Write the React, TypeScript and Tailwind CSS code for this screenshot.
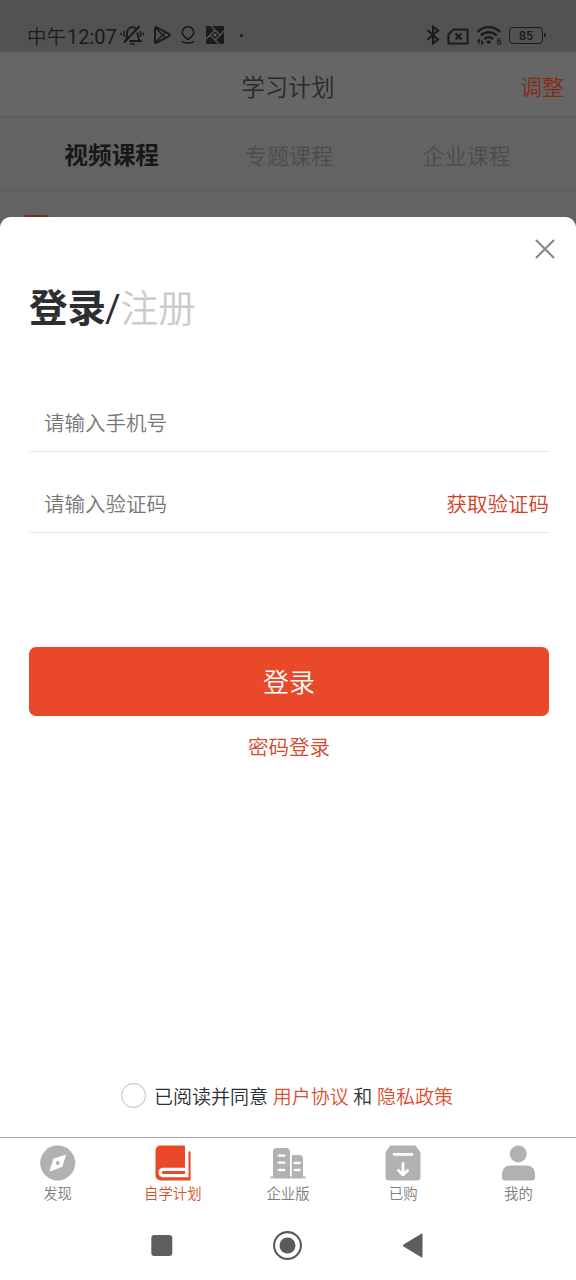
import { useState } from 'react'
import type { ReactNode } from 'react'

// ─── 状态栏图标 ───────────────────────────────────────────────────────────────

function MutedBellIcon() {
  return (
    <svg width="24" height="20" viewBox="0 0 24 20" fill="none" stroke="#1b1b1b" strokeWidth="2">
      <path d="M5.5 15.5C7 14 7 12.5 7 9c0-4 2.2-6.7 5.2-6.7 1.9 0 3.2.7 4.1 1.7M17.5 7.5c.2 4 .2 6.2 2.7 8.500H9.500" />
      <path d="M4 17.500 19.500 1.200" strokeWidth="2.100" />
      <path d="M10 19h5M4 6v6M20.500 6v6" strokeWidth="1.600" />
      <path d="M1 7.800v2.500M23.200 7.800v2.500" strokeWidth="1.600" />
    </svg>
  )
}

function PlayStoreIcon() {
  return (
    <svg width="17" height="18" viewBox="0 0 17 18" fill="none" stroke="#1b1b1b" strokeWidth="1.900" strokeLinejoin="round">
      <path d="M1 2.200c0-1 .8-1.400 1.700-.9l12.300 6.500c1 .6 1 1.700 0 2.300L2.700 16.700c-.9.500-1.700.1-1.700-.9z" />
      <path d="M1.500 1.700 11.500 12M1.500 16.300 11.500 6" strokeWidth="1.600" />
    </svg>
  )
}

function PinIcon() {
  return (
    <svg width="14" height="18" viewBox="0 0 14 18" fill="none" stroke="#1b1b1b" strokeWidth="1.600" strokeLinecap="round">
      <path d="M7 13.500C4.500 11.500 1.300 9.800 1.300 6.400a5.700 5.700 0 0 1 11.400 0C12.700 9.800 9.500 11.500 7 13.500z" />
      <path d="M1.500 15.500c2.500 2.200 8.500 2.200 11 0" />
    </svg>
  )
}

function PinwheelIcon() {
  return (
    <svg width="18" height="18" viewBox="0 0 18 18">
      <rect width="18" height="18" rx="1" fill="#1b1b1b" />
      <g stroke="#525252" strokeWidth="1.500" fill="none">
        <path d="M9 4 14 9 9 14 4 9zM9 4 5 0M14 9l4-4M9 14l4 4M4 9l-4 4" />
      </g>
      <path d="M9 7 11 9 9 11 7 9z" fill="#606060" />
    </svg>
  )
}

function BluetoothIcon() {
  return (
    <svg width="14" height="20" viewBox="0 0 14 20" fill="none" stroke="#1b1b1b" strokeWidth="2.100">
      <path d="M1.500 5.300 12 14.500 7 18.300V1.700l5 3.800L1.500 14.700" />
    </svg>
  )
}

function SimIcon() {
  return (
    <svg width="22" height="17" viewBox="0 0 22 17" fill="none" stroke="#1b1b1b" strokeWidth="2" strokeLinejoin="round">
      <path d="M6.500 1.400H20a.6.600 0 0 1 .6.600v13a.6.600 0 0 1-.6.600H2a.6.600 0 0 1-.6-.6V6.500z" />
      <path d="M8.500 5.500 14.500 11.500M14.500 5.500 8.500 11.500" strokeWidth="2.200" />
    </svg>
  )
}

function WifiIcon() {
  return (
    <svg width="26" height="20" viewBox="0 0 26 20" fill="none" stroke="#1b1b1b" strokeWidth="2.400">
      <path d="M1.500 6.800C8 .5 17.500.5 24 6.800M4.800 10.500c4.500-4.300 11.400-4.300 15.900 0M8.300 14c2.500-2.300 6.400-2.300 8.900 0" />
      <path d="M12.700 19 9.900 16.500c1.700-1.300 3.900-1.300 5.600 0z" fill="#1b1b1b" stroke="none" />
      <path d="M3.200 19v-4.300L1.300 16.500M5.700 14.700V19l1.900-1.800" strokeWidth="1.200" />
      <text x="20.500" y="19.500" fill="#1b1b1b" stroke="none" className="font-['Roboto',sans-serif] text-[8.5px] font-bold">
        6
      </text>
    </svg>
  )
}

function StatusBar() {
  return (
    <div className="flex h-[53px] items-start border-b-2 border-[#5c5c5c] bg-[#525252] pt-[25px] text-[#1b1b1b]">
      <div className="ml-[27px] flex h-5 w-[93px] shrink-0 items-center whitespace-nowrap text-[19.5px] leading-5">
        <span className="mt-[5px] font-[350]">中午</span>
        <span className="mt-[3px] ml-px font-['Roboto',sans-serif] text-[20px]">12:07</span>
      </div>
      <div className="flex h-5 items-center">
        <MutedBellIcon />
        <div className="ml-[10px]"><PlayStoreIcon /></div>
        <div className="ml-[10px]"><PinIcon /></div>
        <div className="ml-[11px]"><PinwheelIcon /></div>
        <span className="ml-4 size-[3px] rounded-full bg-[#1b1b1b]" />
      </div>
      <div className="mr-[30px] ml-auto flex h-5 items-center">
        <BluetoothIcon />
        <div className="ml-[7px] pt-[2px]"><SimIcon /></div>
        <div className="ml-[7px]"><WifiIcon /></div>
        <div className="ml-[7px] flex items-center">
          <span className="flex h-[17px] w-[34px] items-center justify-center rounded-[4px] border-[1.5px] border-[#1b1b1b] font-['Roboto',sans-serif] text-[12.5px] font-medium leading-3">
            <span className="mt-px">85</span>
          </span>
          <span className="ml-px h-1 w-[2px] rounded-r bg-[#1b1b1b]" />
        </div>
      </div>
    </div>
  )
}

// ─── 底部导航图标 ─────────────────────────────────────────────────────────────

const DiscoverIcon = () => (
  <svg width="36" height="36" viewBox="0 0 36 36">
    <circle cx="17.700" cy="18" r="17.500" fill="#b1b1b1" />
    <path d="M26.200 9.500 22.300 21.700 9.200 26.700 13.400 13.700z" fill="#fff" />
    <circle cx="17.700" cy="18" r="1.900" fill="#b1b1b1" />
  </svg>
)

const PlanIcon = () => (
  <svg width="36" height="36" viewBox="0 0 36 36">
    <path d="M5.500.500H29a1 1 0 0 1 1 1V22.700H8a5 5 0 0 0-4.500 5A5 5 0 0 0 8 32.200H33.500V6.500H35.600V35.500H5.500a5 5 0 0 1-5-5V5.500a5 5 0 0 1 5-5z" fill="#e94829" />
    <path d="M30 25.900H8.200a1.500 1.500 0 0 0 0 3H30z" fill="#e94829" />
  </svg>
)

const CompanyIcon = () => (
  <svg width="36" height="36" viewBox="0 0 36 36" fill="#b1b1b1">
    <path d="M.5 31.500H3V7a4 4 0 0 1 4-4h9a4 4 0 0 1 4 4v24.500h1.800V10H29a4 4 0 0 1 4 4v17.500h2.500v2H.5z" />
    <path d="M8.700 10.700h5.600M8.700 17.700h5.600M8.700 25h5.600M24.700 18h5M24.700 25h5" stroke="#fff" strokeWidth="2.300" strokeLinecap="round" />
  </svg>
)

const PurchasedIcon = () => (
  <svg width="36" height="36" viewBox="0 0 36 36">
    <path d="M7 .5h22a3 3 0 0 1 2.500 1.200l3 4.300c.6.800 1 1.500 1 2.500V32a3.500 3.500 0 0 1-3.500 3.500H4A3.500 3.500 0 0 1 .5 32V8.500c0-1 .3-1.700.9-2.500l3-4.300A3 3 0 0 1 7 .5z" fill="#b1b1b1" />
    <g fill="none" stroke="#fff" strokeWidth="2.800" strokeLinecap="round" strokeLinejoin="round">
      <path d="M9 9.300H27M18 18.500V29M13.500 25.500 18 30 22.500 25.500" />
    </g>
  </svg>
)

const MineIcon = () => (
  <svg width="36" height="36" viewBox="0 0 36 36" fill="#b1b1b1">
    <circle cx="18.300" cy="9" r="8.500" />
    <path d="M10 20.500H27a8 8 0 0 1 8 8v4a3 3 0 0 1-3 3H5a3 3 0 0 1-3-3v-4a8 8 0 0 1 8-8z" />
  </svg>
)

interface NavItem {
  label: string
  icon: ReactNode
  active?: boolean
}

const NAV_ITEMS: NavItem[] = [
  { label: '发现', icon: <DiscoverIcon /> },
  { label: '自学计划', icon: <PlanIcon />, active: true },
  { label: '企业版', icon: <CompanyIcon /> },
  { label: '已购', icon: <PurchasedIcon /> },
  { label: '我的', icon: <MineIcon /> },
]

function BottomNav() {
  return (
    <nav className="flex h-[73px] border-t border-[#a9a9a9] bg-white pt-[7px]">
      {NAV_ITEMS.map((item) => (
        <button key={item.label} className="flex flex-1 flex-col items-center">
          {item.icon}
          <span className={`mt-1 text-[14.4px] leading-5 font-[350] ${item.active ? 'text-[#d9502f]' : 'text-[#7c7c7c]'}`}>
            {item.label}
          </span>
        </button>
      ))}
    </nav>
  )
}

function SystemNav() {
  return (
    <div className="flex h-[70px] bg-white pt-[20px] pl-[146px]">
      <svg width="31" height="31" viewBox="0 0 31 31">
        <rect x="5.300" y="5" width="21" height="21" rx="3" fill="#5e5e5e" />
      </svg>
      <svg className="ml-[95px]" width="31" height="31" viewBox="0 0 31 31">
        <circle cx="15.500" cy="15.500" r="13.400" fill="none" stroke="#5a5a5a" strokeWidth="2.100" />
        <circle cx="15.500" cy="15.500" r="8" fill="#5a5a5a" />
      </svg>
      <svg className="ml-[95px]" width="31" height="31" viewBox="0 0 31 31">
        <path d="M5.500 14.600 23.300 3.700q1.200-.6 1.200.7V26.600q0 1.300-1.200.7L5.500 16.400q-1.200-.9 0-1.800z" fill="#5e5e5e" />
      </svg>
    </div>
  )
}

// ─── 登录弹层 ─────────────────────────────────────────────────────────────────

function LoginSheet() {
  const [phone, setPhone] = useState('')
  const [code, setCode] = useState('')
  const [agreed, setAgreed] = useState(false)

  return (
    <div className="bg-[#636363]">
      <div className="flex h-[920px] flex-col rounded-t-[11px] bg-white pr-[27px] pl-[29px]">
        <div className="flex h-[60px] justify-end pt-[22px]">
          <button aria-label="关闭" className="-mr-[6px] size-5">
            <svg width="20" height="20" viewBox="0 0 20 20" stroke="#868686" strokeWidth="2" strokeLinecap="round">
              <path d="M1.500 1.500 18.500 18.500M18.500 1.500 1.500 18.500" />
            </svg>
          </button>
        </div>

        <div className="flex h-[60px] items-center pt-1 text-[38px] text-[#2d2e30]">
          <span className="text-[38.5px] font-bold">登录</span>
          <span className="-ml-px">/</span>
          <span className="text-[37.5px] font-[350] text-[#cbcbcb]">注册</span>
        </div>

        <div className="mt-[55px] flex h-[60px] items-center border-b border-[#e4e4e4] pt-[5px] pl-[15px]">
          <input
            value={phone}
            onChange={(e) => setPhone(e.target.value)}
            placeholder="请输入手机号"
            className="flex-1 text-[20.5px] font-[350] outline-none placeholder:text-[#767676]"
          />
        </div>
        <div className="mt-[21px] flex h-[60px] items-center border-b border-[#e4e4e4] pt-[5px] pl-[15px]">
          <input
            value={code}
            onChange={(e) => setCode(e.target.value)}
            placeholder="请输入验证码"
            className="min-w-0 flex-1 text-[20.5px] font-[350] outline-none placeholder:text-[#767676]"
          />
          <button className="shrink-0 text-[20.5px] font-[350] text-[#d43c1e]">获取验证码</button>
        </div>

        <button className="mt-[114px] h-[69px] rounded-[7px] bg-[#e94829] pt-1 text-[26px] font-[350] text-white">登录</button>
        <button className="mt-[17px] h-[30px] text-[20.5px] leading-[30px] font-[350] text-[#d04a2e]">密码登录</button>

        <div className="mt-auto mb-[27px] flex h-[30px] items-center pl-[92px] text-[19px] font-[350] whitespace-pre text-[#2d2e30]">
          <button
            aria-label="同意协议"
            aria-pressed={agreed}
            onClick={() => setAgreed((v) => !v)}
            className={`mr-2 size-[25px] rounded-full border border-[#bcbcbc] ${agreed ? 'bg-[#e94829]' : 'bg-white'}`}
          />
          <p className="pt-[6px]">
            已阅读并同意 <span className="text-[#d9502f]">用户协议</span> 和 <span className="text-[#d9502f]">隐私政策</span>
          </p>
        </div>
      </div>
    </div>
  )
}

// ─── 页面 ─────────────────────────────────────────────────────────────────────

const App = () => {
  return (
    <div className="flex h-[1280px] w-[576px] flex-col overflow-hidden bg-white font-['Roboto','Noto_Sans_CJK_SC',sans-serif]">
      <StatusBar />

      <header className="grid h-[63px] grid-cols-[1fr_auto_1fr] items-center bg-[#666666] pt-[6px] pr-3">
        <span />
        <h1 className="pt-px pl-3 text-[23.3px] font-[350] text-[#292929]">学习计划</h1>
        <button className="justify-self-end text-[22px] font-[350] text-[#842b1b]">调整</button>
      </header>

      <div className="grid h-[75px] grid-cols-3 items-center border-y border-[#5c5c5c] bg-[#636363] pt-1 pr-[21px] pl-[23px] text-center">
        <span className="pt-[2px] text-[23.7px] font-bold text-[#171717]">视频课程</span>
        <span className="pt-px text-[22px] font-[350] text-[#4c4c4c]">专题课程</span>
        <span className="pt-px pl-px text-[22px] font-[350] text-[#4c4c4c]">企业课程</span>
      </div>

      {/* 被弹层遮住的列表，只露出封面上沿 */}
      <div className="flex h-[26px] items-end bg-[#636363] pl-6">
        <div className="h-[2px] w-[25px] rounded-t-sm bg-[#6a3423]" />
      </div>

      <LoginSheet />
      <BottomNav />
      <SystemNav />
    </div>
  )
}

export default App
